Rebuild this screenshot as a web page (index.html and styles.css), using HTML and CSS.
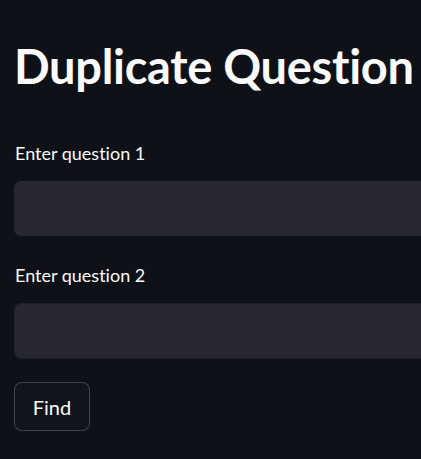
FILE: index.html
```html
<!DOCTYPE html>
<html>
<head>
<meta charset="utf-8">
<link rel="stylesheet" href="styles.css">
</head>
<body>
<main class="app">
  <h1 class="title">Duplicate Question</h1>
  <div class="field field-first">
    <label class="label">Enter question 1</label>
    <div class="input"></div>
  </div>
  <div class="field">
    <label class="label">Enter question 2</label>
    <div class="input input-bordered"></div>
  </div>
  <button class="btn">Find</button>
</main>
</body>
</html>
```

FILE: styles.css
```css
html, body {
  margin: 0;
  padding: 0;
  background: #0e1117;
  overflow: hidden;
  width: 421px;
  height: 459px;
}
.app {
  padding: 0 0 0 14px;
  font-family: Lato, "Open Sans", sans-serif;
  font-variant-ligatures: none;
  color: #fafafa;
  width: 600px;
}
.title {
  margin: 0;
  padding-top: 36px;
  height: 60px;
  font-size: 47px;
  font-weight: 700;
  line-height: 60px;
  white-space: nowrap;
  letter-spacing: -0.3px;
  color: #fafafa;
}
.field {
  display: flex;
  flex-direction: column;
  margin-bottom: 23px;
}
.field-first {
  margin-top: 45px;
  margin-bottom: 27px;
}
.label {
  font-size: 18px;
  line-height: 24px;
  height: 24px;
  margin-bottom: 16px;
  padding-left: 1px;
}
.input {
  height: 55px;
  background: #262730;
  border-radius: 7px;
}
.input-bordered {
  box-sizing: border-box;
  height: 56px;
  border: 1px solid #1e1f27;
}
.btn {
  display: block;
  margin-top: 0;
  width: 76px;
  height: 49px;
  box-sizing: border-box;
  background: #11141b;
  border: 1px solid rgba(250, 250, 250, 0.2);
  border-radius: 8px;
  color: #fafafa;
  font-family: Lato, "Open Sans", sans-serif;
  font-size: 20px;
  padding: 0;
}
```
